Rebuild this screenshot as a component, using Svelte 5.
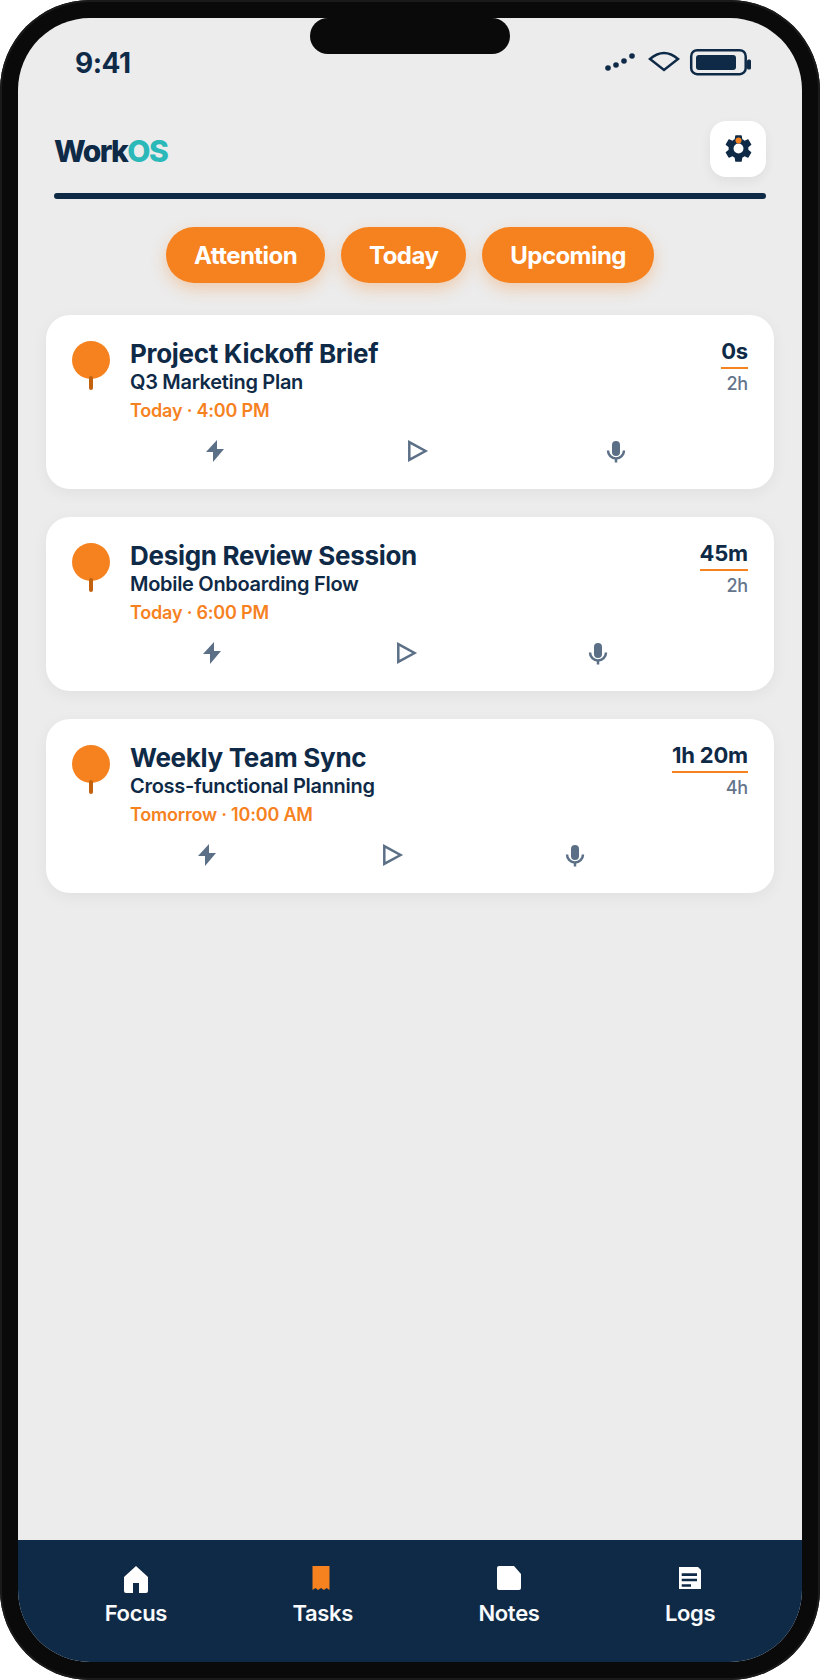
<script>
  const tasks = [
    { title: "Project Kickoff Brief", project: "Q3 Marketing Plan", due: "Today · 4:00 PM", spent: "0s", total: "2h" },
    { title: "Design Review Session", project: "Mobile Onboarding Flow", due: "Today · 6:00 PM", spent: "45m", total: "2h" },
    { title: "Weekly Team Sync", project: "Cross-functional Planning", due: "Tomorrow · 10:00 AM", spent: "1h 20m", total: "4h" },
  ];
  const filters = ["Attention", "Today", "Upcoming"];
</script>

<div class="phone">
  <div class="screen">
    <div class="notch"></div>

    <div class="status">
      <span class="clock">9:41</span>
      <svg class="status-icons" width="144" height="28" viewBox="0 0 144 28">
        <circle cx="3" cy="19" r="2.8" />
        <circle cx="11" cy="16" r="2.8" />
        <circle cx="19" cy="12" r="2.8" />
        <circle cx="27" cy="7" r="2.8" />
        <path class="wifi" d="M45 10 Q59 -2 73 10 L59 21 Z" />
        <rect class="batt" x="86.2" y="1.2" width="54.5" height="24" rx="6" />
        <rect x="91" y="6" width="40" height="15" rx="3" />
        <rect x="142" y="10.5" width="4" height="10" rx="1.5" />
      </svg>
    </div>

    <header class="top">
      <div class="brand-row">
        <h1 class="brand">Work<span>OS</span></h1>
        <button class="gear" aria-label="Settings">
          <svg width="33" height="33" viewBox="0 0 24 24">
            <path fill="#0f2a47" d="M19.14 12.94c.04-.3.06-.61.06-.94 0-.32-.02-.64-.07-.94l2.03-1.58a.49.49 0 0 0 .12-.61l-1.92-3.32a.488.488 0 0 0-.59-.22l-2.39.96c-.5-.38-1.03-.7-1.62-.94l-.36-2.54a.484.484 0 0 0-.48-.41h-3.84c-.24 0-.43.17-.47.41l-.36 2.54c-.59.24-1.13.57-1.62.94l-2.39-.96c-.22-.08-.47 0-.59.22L2.74 8.87c-.12.21-.08.47.12.61l2.03 1.58c-.05.3-.09.63-.09.94s.02.64.07.94l-2.03 1.58a.49.49 0 0 0-.12.61l1.92 3.32c.12.22.37.29.59.22l2.39-.96c.5.38 1.03.7 1.62.94l.36 2.54c.05.24.24.41.48.41h3.84c.24 0 .44-.17.47-.41l.36-2.54c.59-.24 1.13-.56 1.62-.94l2.39.96c.22.08.47 0 .59-.22l1.92-3.32c.12-.22.07-.47-.12-.61l-2.01-1.58z" />
            <circle cx="12" cy="12" r="3.6" fill="#fff" />
            <circle cx="12" cy="6.200" r="2.2" fill="#f6821f" />
          </svg>
        </button>
      </div>
      <div class="rule"></div>
    </header>

    <div class="filters">
      {#each filters as f}
        <button class="pill">{f}</button>
      {/each}
    </div>

    <main class="list">
      {#each tasks as t}
        <article class="card">
          <div class="dot"><span class="stem"></span></div>
          <div class="main">
            <div class="text">
              <h2>{t.title}</h2>
              <p class="project">{t.project}</p>
              <p class="due">{t.due}</p>
            </div>
            <div class="actions">
              <svg width="24" height="24" viewBox="0 0 24 24"><path class="fill" d="M14 1 3 13h7v10l11-13h-7z" /></svg>
              <svg width="24" height="24" viewBox="0 0 24 24"><path class="line" d="M5.300 3.200 21.500 12 5.300 20.800z" /></svg>
              <svg width="24" height="24" viewBox="0 0 24 24">
                <rect class="fill" x="8" y="2" width="8" height="15" rx="4" />
                <path class="line" d="M4 11.500a8 8 0 0 0 16 0M12 19.500v4" />
              </svg>
            </div>
          </div>
          <div class="times">
            <span class="spent">{t.spent}</span>
            <span class="total">{t.total}</span>
          </div>
        </article>
      {/each}
    </main>

    <nav class="tabs">
      <div class="tab">
        <svg width="28" height="28" viewBox="0 0 28 28">
          <path fill="#fff" d="M14 0 2 11v14a2 2 0 0 0 2 2h7V17h6v10h7a2 2 0 0 0 2-2V11z" />
        </svg>
        <span>Focus</span>
      </div>
      <div class="tab">
        <svg width="28" height="28" viewBox="0 0 28 28">
          <path fill="#f6821f" d="M3.500 0h17v24l-3-2-2.500 2-3-2-3 2-2.500-2-3 2z" />
        </svg>
        <span>Tasks</span>
      </div>
      <div class="tab">
        <svg width="28" height="28" viewBox="0 0 28 28">
          <path fill="#fff" d="M4 0h15l7 8v14a2 2 0 0 1-2 2H4a2 2 0 0 1-2-2V2a2 2 0 0 1 2-2z" />
        </svg>
        <span>Notes</span>
      </div>
      <div class="tab">
        <svg width="28" height="28" viewBox="0 0 28 28">
          <path fill="#fff" d="M3 1h19l3 3v19H3z" />
          <path fill="#0f2a47" d="M5.700 7.300H21V10H5.700zM5.700 12.700H21v2.600H5.700zM5.700 18.300H15v2.400H5.700z" />
        </svg>
        <span>Logs</span>
      </div>
    </nav>
  </div>
</div>

<style>
  :global(body) {
    margin: 0;
    background: #fff;
  }

  .phone {
    width: 820px;
    height: 1680px;
    box-sizing: border-box;
    padding: 18px;
    border-radius: 90px;
    background: #0a0a0a;
    box-shadow: inset 0 0 0 2px #1a1a1a;
    font-family: Inter, "Liberation Sans", sans-serif;
    font-kerning: normal;
    text-rendering: optimizeLegibility;
    color: #0f2a47;
  }

  .screen {
    position: relative;
    height: 100%;
    display: flex;
    flex-direction: column;
    background: #ececec;
    border-radius: 72px;
    overflow: hidden;
  }

  .notch {
    position: absolute;
    top: 0;
    left: 292px;
    width: 200px;
    height: 36px;
    background: #0a0a0a;
    border-radius: 18px;
  }

  .status {
    display: flex;
    justify-content: space-between;
    align-items: center;
    height: 43px;
    padding: 23px 53px 0 57px;
    flex: none;
  }

  .clock {
    font-size: 28px;
    font-weight: 700;
    line-height: 34px;
    letter-spacing: -0.5px;
  }

  .status-icons {
    fill: #0f2a47;
    overflow: visible;
  }

  .wifi, .batt {
    fill: none;
    stroke: #0f2a47;
    stroke-width: 2.5;
  }

  .top {
    padding: 37px 36px 0;
  }

  .brand-row {
    display: flex;
    justify-content: space-between;
    align-items: center;
  }

  .brand {
    margin: 4px 0 0;
    font-size: 30px;
    font-weight: 800;
    letter-spacing: -1.6px;
  }

  .brand span {
    color: #2bb8b8;
  }

  .gear {
    width: 56px;
    height: 56px;
    padding: 0 0 1px;
    border: 0;
    border-radius: 16px;
    background: #fff;
    box-shadow: 0 4px 12px rgba(0, 0, 0, 0.06);
    display: flex;
    align-items: center;
    justify-content: center;
  }

  .rule {
    height: 6px;
    margin-top: 16px;
    border-radius: 3px;
    background: #0f2a47;
  }

  .filters {
    display: flex;
    justify-content: center;
    gap: 16px;
    margin-top: 28px;
  }

  .pill {
    height: 56px;
    padding: 0 28px;
    border: 0;
    border-radius: 28px;
    background: #f6821f;
    color: #fff;
    font: 700 24px Inter, sans-serif;
    letter-spacing: -0.55px;
    box-shadow: 0 6px 16px rgba(246, 130, 31, 0.3);
  }

  .list {
    flex: 1;
    display: flex;
    flex-direction: column;
    gap: 28px;
    padding: 32px 28px 0;
  }

  .card {
    display: flex;
    height: 174px;
    box-sizing: border-box;
    padding: 26px 26px 0;
    background: #fff;
    border-radius: 24px;
    box-shadow: 0 4px 16px rgba(0, 0, 0, 0.05);
  }

  .dot {
    position: relative;
    flex: none;
    width: 38px;
    height: 38px;
    border-radius: 50%;
    background: #f6821f;
  }

  .stem {
    position: absolute;
    left: 17px;
    top: 35px;
    width: 4px;
    height: 14px;
    border-radius: 2px;
    background: #c2620f;
  }

  .main {
    flex: 1;
    margin: 0 5px;
    display: flex;
    flex-direction: column;
  }

  .text {
    margin-top: -3px;
    padding-left: 15px;
  }

  h2 {
    margin: 0;
    font-size: 26px;
    font-weight: 700;
    line-height: 32px;
    letter-spacing: -0.3px;
  }

  .project {
    margin: 0;
    font-size: 20px;
    font-weight: 600;
    line-height: 24px;
    letter-spacing: -0.3px;
  }

  .due {
    margin: 6px 0 0;
    color: #f6821f;
    font-size: 18px;
    font-weight: 600;
    line-height: 22px;
    letter-spacing: -0.2px;
  }

  .actions {
    display: flex;
    justify-content: space-around;
    margin-top: 17px;
  }

  .actions svg {
    overflow: visible;
  }

  .fill {
    fill: #5b6f87;
  }

  .line {
    fill: none;
    stroke: #5b6f87;
    stroke-width: 2.5;
  }

  .times {
    flex: none;
    margin-top: -4px;
    display: flex;
    flex-direction: column;
    align-items: flex-end;
  }

  .spent {
    font-size: 22px;
    font-weight: 700;
    line-height: 28px;
    letter-spacing: -0.2px;
    padding-bottom: 2px;
    border-bottom: 2px solid #f6821f;
  }

  .total {
    margin-top: 4px;
    color: #64748b;
    font-size: 18px;
    font-weight: 500;
    line-height: 22px;
    letter-spacing: -0.2px;
  }

  .tabs {
    flex: none;
    height: 122px;
    box-sizing: border-box;
    display: flex;
    justify-content: space-around;
    padding: 26px 24px 0;
    background: #0f2a47;
  }

  .tab {
    display: flex;
    flex-direction: column;
    align-items: center;
    gap: 6px;
    color: #f8fafc;
    font-size: 22px;
    font-weight: 600;
    letter-spacing: -0.3px;
  }
</style>
